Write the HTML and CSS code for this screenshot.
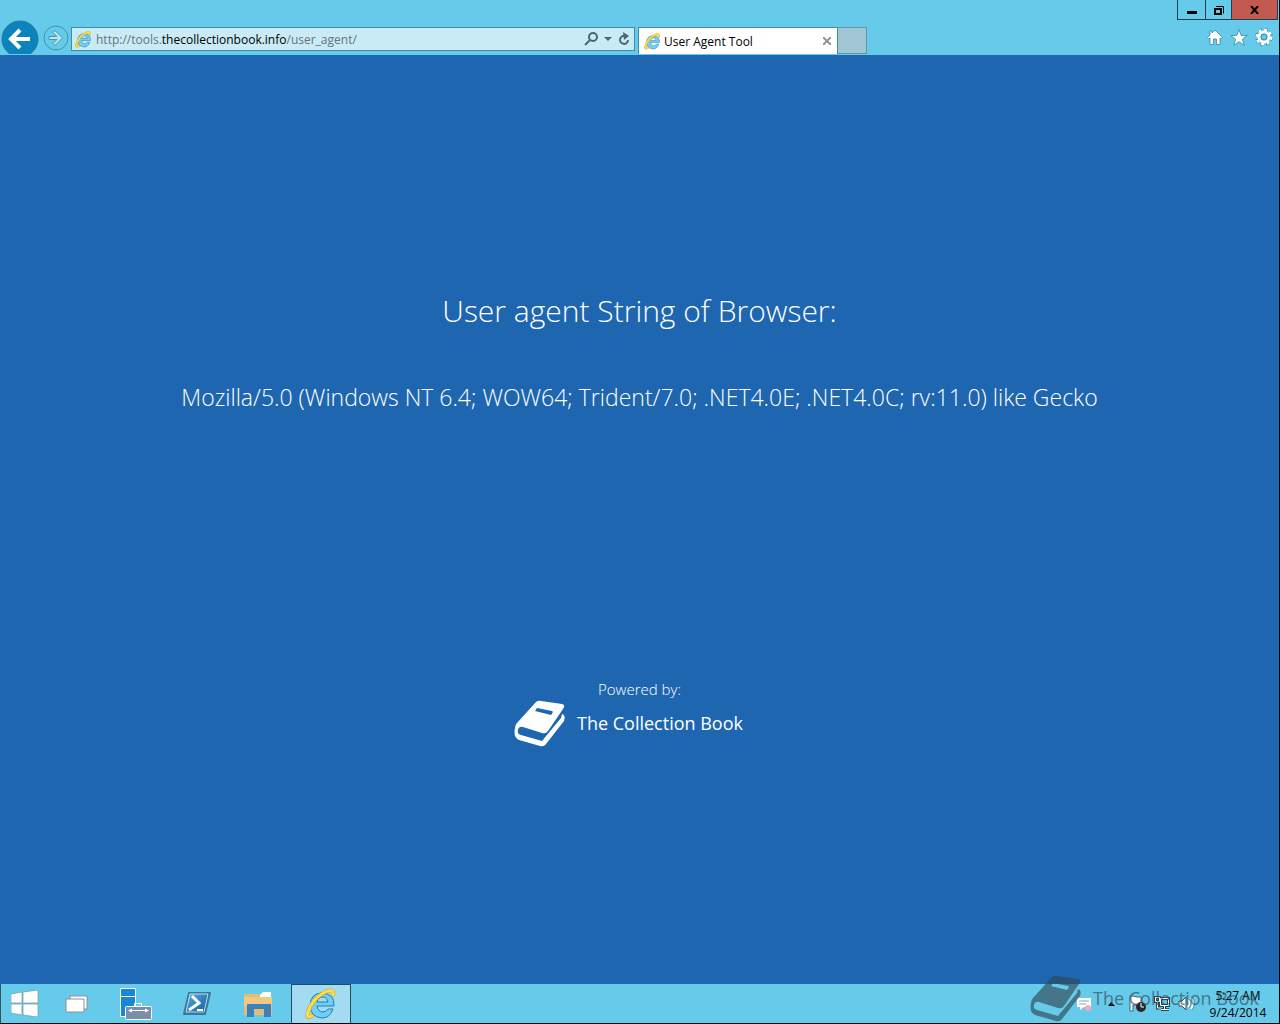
FILE: index.html
```html
<!DOCTYPE html>
<html lang="en">
<head>
  <meta charset="UTF-8">
  <meta name="viewport" content="width=device-width, initial-scale=1.0">
  <title>User Agent Tool</title>
  <link rel="stylesheet" href="styles.css">
</head>
<body>
  <!-- shared icons -->
  <svg class="defs" width="0" height="0" aria-hidden="true">
    <symbol id="book" viewBox="0 0 52 48">
      <path fill="currentColor" fill-rule="evenodd" d="M22 3Q24 1 27 2L48 5Q52 6 49 10L34 32Q32 35 28 34L9 28Q5 27 4 31Q3 35 7 36L28 42L47 19L48 15Q52 16 50 22L32 45Q30 48 26 47L5 41Q-1 38 1 29Q1 26 3 24ZM23 9L21 12L37 16Q40 13 38 12Z"/>
    </symbol>
    <symbol id="ie" viewBox="0 0 32 32">
      <path fill="#6fd0f5" stroke="#237cb5" d="M29 18H12q1 6 6 6q3 0 5-3h5q-3 9-11 9Q5 29 5 17Q6 5 17 5Q30 6 29 18ZM12 14h11q-1-5-5-5q-5 0-6 5Z"/>
      <path fill="none" stroke="#d49d18" stroke-width="4" stroke-linecap="round" d="M7 28Q1 31 3 24Q7 11 20 4Q29 0 28 7"/>
      <path fill="none" stroke="#ffdc4c" stroke-width="3" stroke-linecap="round" d="M7 28Q1 31 3 24Q7 11 20 4Q29 0 28 7"/>
    </symbol>
  </svg>

  <div class="screen">
    <header class="browser">
      <div class="titlebar">
        <button class="win-btn" aria-label="Minimize"><svg width="10" height="9"><path fill="#000" d="M0 6h10v3H0z"/></svg></button>
        <button class="win-btn restore" aria-label="Restore"><svg width="10" height="10"><path fill="none" stroke="#000" stroke-width="2" d="M1 4h6v5H1z"/><path fill="none" stroke="#000" d="M2 1.5h7.500v7"/></svg></button>
        <button class="win-btn close" aria-label="Close"><svg width="10" height="8"><path fill="none" stroke="#000" stroke-width="2" d="M1 0l7 8M8 0L1 8"/></svg></button>
      </div>

      <div class="toolbar">
        <button class="nav-btn back" aria-label="Back">
          <svg width="40" height="38"><circle cx="20" cy="19" r="18" fill="#0b84bd" stroke="#2b7597"/><path fill="none" stroke="#fff" stroke-width="4" d="M30 19H13M20 10l-9 9 9 9"/></svg>
        </button>
        <button class="nav-btn forward" aria-label="Forward">
          <svg width="28" height="28"><circle cx="14" cy="15" r="12" fill="none" stroke="#4292ae"/><path fill="#b8e8f6" stroke="#4a93ac" d="M7 13.500h8l-4-4 2-2 7.500 7.500-7.500 7.500-2-2 4-4H7z"/></svg>
        </button>

        <div class="address">
          <svg width="17" height="17"><use href="#ie"/></svg>
          <a class="url" href="#">http://tools.<b>thecollectionbook.info</b>/user_agent/</a>
          <button class="plain" aria-label="Search"><svg width="14" height="14" fill="none" stroke="#4c6670" stroke-width="2"><circle cx="9" cy="5" r="4"/><path d="M6 8l-5 5"/></svg></button>
          <button class="plain" aria-label="Show address list"><svg width="8" height="4"><path fill="#4c6670" d="M0 0h8L4 4z"/></svg></button>
          <button class="plain" aria-label="Refresh"><svg width="12" height="14" fill="none" stroke="#4c6670" stroke-width="2"><path d="M7 4a4 4 0 1 0 3 4"/><path fill="#4c6670" stroke="none" d="M5 0l6 4-5 4z"/></svg></button>
        </div>

        <div class="tab">
          <svg width="17" height="17"><use href="#ie"/></svg>
          <span class="tab-title">User Agent Tool</span>
          <button class="plain" aria-label="Close tab"><svg width="8" height="8"><path fill="none" stroke="#929292" stroke-width="2" d="M0 0l8 8M8 0L0 8"/></svg></button>
        </div>
        <button class="new-tab" aria-label="New tab"></button>

        <div class="tools">
          <button class="plain" aria-label="Home"><svg width="16" height="16"><path fill="#fff" stroke="#3b87a2" stroke-width=".8" d="M8 1l7.500 7.500-1 1L13 9v6.500H9.500V10h-3v5.500H3V9l-1.500.5-1-1L3 6V2h2v2z"/></svg></button>
          <button class="plain" aria-label="Favorites"><svg width="18" height="17"><path fill="#fff" stroke="#3b87a2" stroke-width=".8" d="M9 .5l2.200 6h6l-4.800 3.700 1.800 6L9 12.700l-5.200 3.500 1.800-6L.8 6.500h6z"/></svg></button>
          <button class="plain" aria-label="Tools"><svg width="18" height="18" fill="none"><circle cx="9" cy="9" r="7" stroke="#3b87a2" stroke-width="4" stroke-dasharray="3.4 2.1"/><circle cx="9" cy="9" r="7" stroke="#fff" stroke-width="3" stroke-dasharray="2.700 2.798"/><circle cx="9" cy="9" r="5" stroke="#fff" stroke-width="3"/><circle cx="9" cy="9" r="3" stroke="#3b87a2"/></svg></button>
        </div>
      </div>
    </header>

    <main class="page">
      <h1>User agent String of Browser:</h1>
      <p class="agent">Mozilla/5.0 (Windows NT 6.4; WOW64; Trident/7.0; .NET4.0E; .NET4.0C; rv:11.0) like Gecko</p>
      <footer class="powered">
        <p>Powered by:</p>
        <a class="brand" href="#"><svg width="52" height="48"><use href="#book"/></svg>The Collection Book</a>
      </footer>
    </main>

    <div class="taskbar">
      <button class="task start" aria-label="Start"><svg width="28" height="27"><path fill="#fff" stroke="#6b9cac" stroke-width=".7" d="M0 4l11-2v11H0zM12 2l15-2v13H12zM0 14h11v11L0 23zM12 14h15v13l-15-2z"/></svg></button>
      <button class="task view" aria-label="Task view"><svg width="24" height="18" fill="#fff" stroke="#8a9295"><path d="M5 1h17v13H5z"/><path d="M1 4h18v13H1z"/></svg></button>
      <button class="task" aria-label="Server Manager"><svg width="34" height="32"><path fill="#1687d9" stroke="#fff" d="M1.500.5h15v28h-15zM1.500 8.500h15"/><path fill="none" stroke="#fff" d="M15.500 19v-3.500h7V19"/><rect x="6.500" y="18.500" width="26" height="13" rx="1" fill="#7890a8" stroke="#fff"/><path fill="none" stroke="#fff" d="M10 22.500h19"/><path fill="#fff" d="M9 22.500l4-2v4zM30 22.500l-4-2v4z"/></svg></button>
      <button class="task" aria-label="PowerShell"><svg width="30" height="26"><defs><linearGradient id="ps" x2="1" y2="1"><stop stop-color="#6eb9e6"/><stop offset=".5" stop-color="#2f80bd"/><stop offset="1" stop-color="#1c5c90"/></linearGradient></defs><path fill="url(#ps)" stroke="#3c7898" stroke-width="2" stroke-linejoin="round" d="M7 2h21l-5 21H2z"/><path fill="none" stroke="#b9dff2" d="M8 3h18l-4 18H4z"/><path fill="none" stroke="#fff" stroke-width="3" d="M10 5l7 7-10 7"/><path stroke="#fff" stroke-width="2" d="M15 19h6"/></svg></button>
      <button class="task" aria-label="File Explorer"><svg width="30" height="26"><path fill="#e4bc72" d="M1 3h15l2 3h11v18H1z"/><path fill="#fff" d="M17 4l3-3h8v5H17z"/><path fill="#edc982" d="M1 6h28v9H1z"/><path fill="#3c80c0" d="M4 13h24v13h-7v-8H11v8H4z"/></svg></button>
      <button class="task active" aria-label="Internet Explorer"><svg width="32" height="32"><use href="#ie"/></svg></button>

      <div class="tray">
        <svg width="16" height="16"><path fill="#fff" d="M1 2h14v9H8l-4 3v-3H1z"/><path stroke="#85a6b8" d="M3 5h10M3 8h7"/><circle cx="12" cy="12" r="3" fill="#f4a9cc"/></svg>
        <svg class="more" width="7" height="4"><path fill="#000" d="M0 4l3-4 4 4z"/></svg>
        <svg width="18" height="18"><path fill="#fff" stroke="#294650" stroke-width=".8" d="M1 1h3l4 1h4v8H4v6H1z"/><circle cx="12" cy="12" r="5" fill="#24292c"/><path fill="none" stroke="#fff" d="M12 8v4h3"/></svg>
        <svg width="17" height="17" fill="none" stroke="#284854"><path stroke-width="3" d="M6.500 3.500h8v7h-8zM10.500 10v4M7 14.500h8M1.500 2.500h4v4h-4zM3.500 7v6h4"/><path stroke="#fff" d="M6.500 3.500h8v7h-8zM10.500 10v4M7 14.500h8M1.500 2.500h4v4h-4zM3.500 7v6h4"/></svg>
        <svg width="18" height="17"><path fill="#fff" stroke="#344f58" d="M1 6h3l4-4v13l-4-4H1z"/><path fill="none" stroke="#fff" stroke-width="2" d="M10 5q3 3 0 7M13 3q4 5 0 11"/><path fill="none" stroke="#446674" stroke-width=".6" d="M11 4q4 4 0 9M14 2q5 6 0 13"/></svg>
        <div class="clock"><span>5:27 AM</span><span>9/24/2014</span></div>
      </div>

      <div class="watermark"><svg width="52" height="48"><use href="#book"/></svg>The Collection Book</div>
    </div>
  </div>
</body>
</html>
```
FILE: styles.css
```css
* {
  box-sizing: border-box;
}
body {
  margin: 0;
  font-family: "Open Sans", "Noto Sans", sans-serif;
  background: #000;
}
svg {
  display: block;
  flex: none;
}
.defs {
  position: absolute;
}
button {
  display: flex;
  align-items: center;
  justify-content: center;
  padding: 0;
  border: none;
  background: none;
  cursor: pointer;
}
a {
  color: inherit;
  text-decoration: none;
}
.screen {
  display: flex;
  flex-direction: column;
  min-height: 100vh;
  border-right: 1px solid #000;
  border-bottom: 1px solid #000;
}

/* browser frame */
.browser {
  background: #66cbea;
}
.titlebar {
  display: flex;
  justify-content: flex-end;
  height: 20px;
  padding-right: 1px;
}
.win-btn {
  width: 28px;
  border: 1px solid #243f49;
  border-top: none;
  border-right: none;
}
.win-btn.restore {
  width: 26px;
}
.win-btn.close {
  width: 47px;
  border-right: 1px solid #243f49;
  background: #c35a52;
}
.toolbar {
  display: flex;
  align-items: center;
  height: 35px;
  overflow: hidden;
  border-bottom: 1px solid #66cbea;
}
.nav-btn {
  height: 35px;
  flex: none;
}
.back {
  width: 40px;
  align-items: flex-start;
}
.forward {
  width: 31px;
}
.address {
  display: flex;
  align-items: center;
  gap: 8px;
  flex: 0 1 564px;
  height: 24px;
  padding: 0 4px 0 3px;
  margin-top: 4px;
  border: 1px solid #438ba4;
  background: #c8ebf6;
  font-size: 12px;
}
.address > svg {
  margin-right: -4px;
}
.url {
  flex: 1;
  color: #63757b;
  white-space: nowrap;
  overflow: hidden;
}
.url b {
  font-weight: 400;
  color: #000;
}
.address .plain + .plain {
  margin-left: -2px;
}
.tab {
  display: flex;
  align-items: center;
  gap: 3px;
  width: 200px;
  height: 27px;
  margin-left: 3px;
  padding: 0 6px 0 5px;
  align-self: flex-end;
  border: 1px solid #438ba4;
  border-bottom: none;
  background: #fff;
  font-size: 12px;
}
.tab-title {
  flex: 1;
  white-space: nowrap;
}
.new-tab {
  width: 29px;
  height: 27px;
  align-self: flex-end;
  border: 1px solid #6095a8;
  border-left: none;
  background: #a0c5d3;
}
.tools {
  display: flex;
  align-items: center;
  gap: 7px;
  margin-left: auto;
  padding-right: 6px;
}

/* page */
.page {
  display: flex;
  flex-direction: column;
  align-items: center;
  flex: 1;
  padding: 232px 16px 40px;
  background: #1f66b1;
  color: #fff;
  text-align: center;
}
h1 {
  margin: 0 0 42px;
  font-size: 30px;
  line-height: 48px;
  font-weight: 300;
}
.agent {
  margin: 0;
  font-size: 23px;
  line-height: 40px;
  font-weight: 300;
}
.powered {
  margin-top: 262px;
  font-size: 15px;
}
.powered p {
  margin: 0;
  line-height: 20px;
  font-weight: 300;
}
.brand,
.watermark {
  display: flex;
  align-items: center;
  gap: 11px;
  font-size: 18px;
  white-space: nowrap;
}
.brand {
  padding-right: 22px;
}

/* taskbar */
.taskbar {
  position: relative;
  display: flex;
  height: 39px;
  background: #66cbea;
  border-left: 1px solid #37515c;
}
.task {
  width: 61px;
}
.task.start {
  width: 48px;
}
.task.view {
  width: 56px;
}
.task.active {
  width: 60px;
  margin-left: 3px;
  border: 1px solid #244b5a;
  border-bottom: none;
  background: #a3dcf1;
}
.tray {
  display: flex;
  align-items: center;
  gap: 7px;
  margin-left: auto;
  padding-right: 12px;
}
.more {
  margin: 0 7px 0 9px;
}
.clock {
  display: flex;
  flex-direction: column;
  align-items: center;
  width: 58px;
  margin-left: 6px;
  font-size: 12px;
  line-height: 17px;
}
.watermark {
  position: absolute;
  right: 20px;
  bottom: 1px;
  color: #2f4954;
  opacity: 0.65;
  pointer-events: none;
}
```
